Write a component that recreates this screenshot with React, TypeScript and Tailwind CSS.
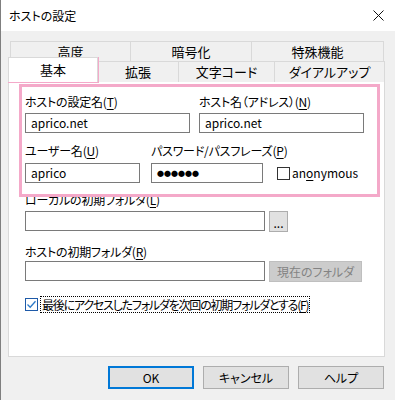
import React from "react";

const font = { fontFamily: '"Noto Sans CJK JP", "Noto Sans", sans-serif' };

// mnemonic label, e.g. ホストの設定名(T)
const Label = ({ text, k }: { text: string; k: string }) => (
  <div className="h-[16px] text-[12px] leading-[16px] text-black whitespace-nowrap tracking-[-0.2px]">
    {text}(<span className="underline underline-offset-2">{k}</span>)
  </div>
);

const Field = ({ value, className }: { value?: string; className: string }) => (
  <div className={`h-[20px] border border-[#7a7a7a] bg-white flex items-center px-[5px] text-[12px] text-black ${className}`}>
    {value}
  </div>
);

const Button = ({ children, primary }: { children: React.ReactNode; primary?: boolean }) => (
  <div
    className={`w-[86px] h-[23px] flex items-center justify-center bg-[#e1e1e1] text-[12px] text-black ${
      primary ? "border-2 border-[#0078d7]" : "border border-[#adadad]"
    }`}
  >
    {children}
  </div>
);

const App = () => {
  return (
    <div
      className="relative w-[395px] h-[400px] overflow-hidden bg-[#f0f0f0] border-l border-[#7f7f7f] [font-feature-settings:'palt']"
      style={font}
    >
      {/* Title bar */}
      <div className="h-[31px] bg-white flex items-center justify-between pl-[8px] pr-[11px]">
        <span className="text-[12px] text-black">ホストの設定</span>
        <svg width="11" height="11" viewBox="0 0 11 11">
          <path d="M0.5 0.5 L10.5 10.5 M10.5 0.5 L0.5 10.5" stroke="#111" strokeWidth="1" />
        </svg>
      </div>

      <div className="pl-[7px] pr-[10px] pt-[10px]">
        {/* Tab row 1 */}
        <div className="ml-[2px] mr-[1px] flex h-[20px] text-[13px] text-black">
          <div className="w-[120px] border-t border-l border-[#d9d9d9] flex items-center justify-center">高度</div>
          <div className="w-[121px] border-t border-l border-[#d9d9d9] flex items-center justify-center">暗号化</div>
          <div className="flex-1 border-t border-l border-r border-[#d9d9d9] flex items-center justify-center">特殊機能</div>
        </div>
        {/* Tab row 2 */}
        <div className="flex h-[21px] text-[13px] text-black">
          <div className="relative z-10 w-[90px] h-[25px] -mt-[4px] bg-white border-t border-l border-r border-[#d9d9d9] flex items-start pt-[2px] justify-center">
            基本
          </div>
          <div className="w-[80px] border-t border-[#d9d9d9] flex items-center justify-center">拡張</div>
          <div className="w-[96px] border-t border-l border-[#d9d9d9] flex items-center justify-center">文字コード</div>
          <div className="flex-1 border-t border-l border-r border-[#d9d9d9] flex items-center justify-center">ダイアルアップ</div>
        </div>

        {/* Panel */}
        <div className="h-[275px] bg-white border-l border-r border-b border-[#d9d9d9] pl-[16px] pt-[12px]">
          <div className="flex gap-[9px]">
            <div className="flex flex-col gap-[3px] w-[165px]">
              <Label text="ホストの設定名" k="T" />
              <Field value="aprico.net" className="w-[165px]" />
            </div>
            <div className="flex flex-col gap-[3px] w-[165px]">
              <Label text="ホスト名（アドレス）" k="N" />
              <Field value="aprico.net" className="w-[165px]" />
            </div>
          </div>

          <div className="flex items-end mt-[10px]">
            <div className="flex flex-col gap-[4px] w-[115px]">
              <Label text="ユーザー名" k="U" />
              <Field value="aprico" className="w-[115px]" />
            </div>
            <div className="flex flex-col gap-[4px] ml-[11px] w-[112px]">
              <Label text="パスワード/パスフレーズ" k="P" />
              <Field className="w-[112px]" />
            </div>
            <div className="flex items-center h-[20px] ml-[14px] text-[12px] text-black">
              <div className="w-[13px] h-[13px] border border-[#333] bg-white mr-[2px]" />
              an<span className="underline underline-offset-2">o</span>nymous
            </div>
          </div>

          <div className="flex flex-col gap-[3px] mt-[9px]">
            <Label text="ローカルの初期フォルダ" k="L" />
            <div className="flex gap-[4px]">
              <Field className="w-[240px]" />
              <div className="w-[19px] h-[21px] bg-[#e1e1e1] border border-[#adadad] flex items-end justify-center pb-[3px] text-[12px] leading-[10px]">
                ...
              </div>
            </div>
          </div>

          <div className="flex flex-col gap-[1px] mt-[12px]">
            <Label text="ホストの初期フォルダ" k="R" />
            <div className="flex gap-[4px]">
              <Field className="w-[240px]" />
              <div className="w-[93px] h-[21px] bg-[#cccccc] border border-[#bfbfbf] flex items-center justify-center text-[12px] text-[#838383]">
                現在のフォルダ
              </div>
            </div>
          </div>

          <div className="flex items-center mt-[14px]">
            <div className="w-[13px] h-[13px] border border-[#1e5aa8] bg-white flex items-center justify-center">
              <svg width="11" height="11" viewBox="0 0 11 11">
                <path d="M1.5 5.5 L4.2 8.2 L9.5 2.2" stroke="#2b79c9" strokeWidth="1.3" fill="none" />
              </svg>
            </div>
            <div className="ml-[2px] px-[1px] border border-dotted border-black text-[12px] leading-[15px] tracking-[-1.2px] text-black whitespace-nowrap">
              最後にアクセスしたフォルダを次回の初期フォルダとする(<span className="underline underline-offset-2">F</span>)
            </div>
          </div>
        </div>

        {/* Buttons */}
        <div className="flex justify-end gap-[9px] mt-[9px] pr-[1px]">
          <Button primary>OK</Button>
          <Button>キャンセル</Button>
          <Button>ヘルプ</Button>
        </div>
      </div>

      {/* Password dots */}
      <div className="absolute left-[156px] top-[166px] text-[7px] leading-[14px] text-black">●●●●●●</div>

      {/* Pink annotation boxes */}
      <div className="absolute left-[7px] top-[57px] w-[91px] h-[26px] border-[3px] border-[#f4a9c9]" />
      <div className="absolute left-[18px] top-[84px] w-[361px] h-[113px] border-[3px] border-[#f4a9c9]" />
    </div>
  );
};

export default App;
